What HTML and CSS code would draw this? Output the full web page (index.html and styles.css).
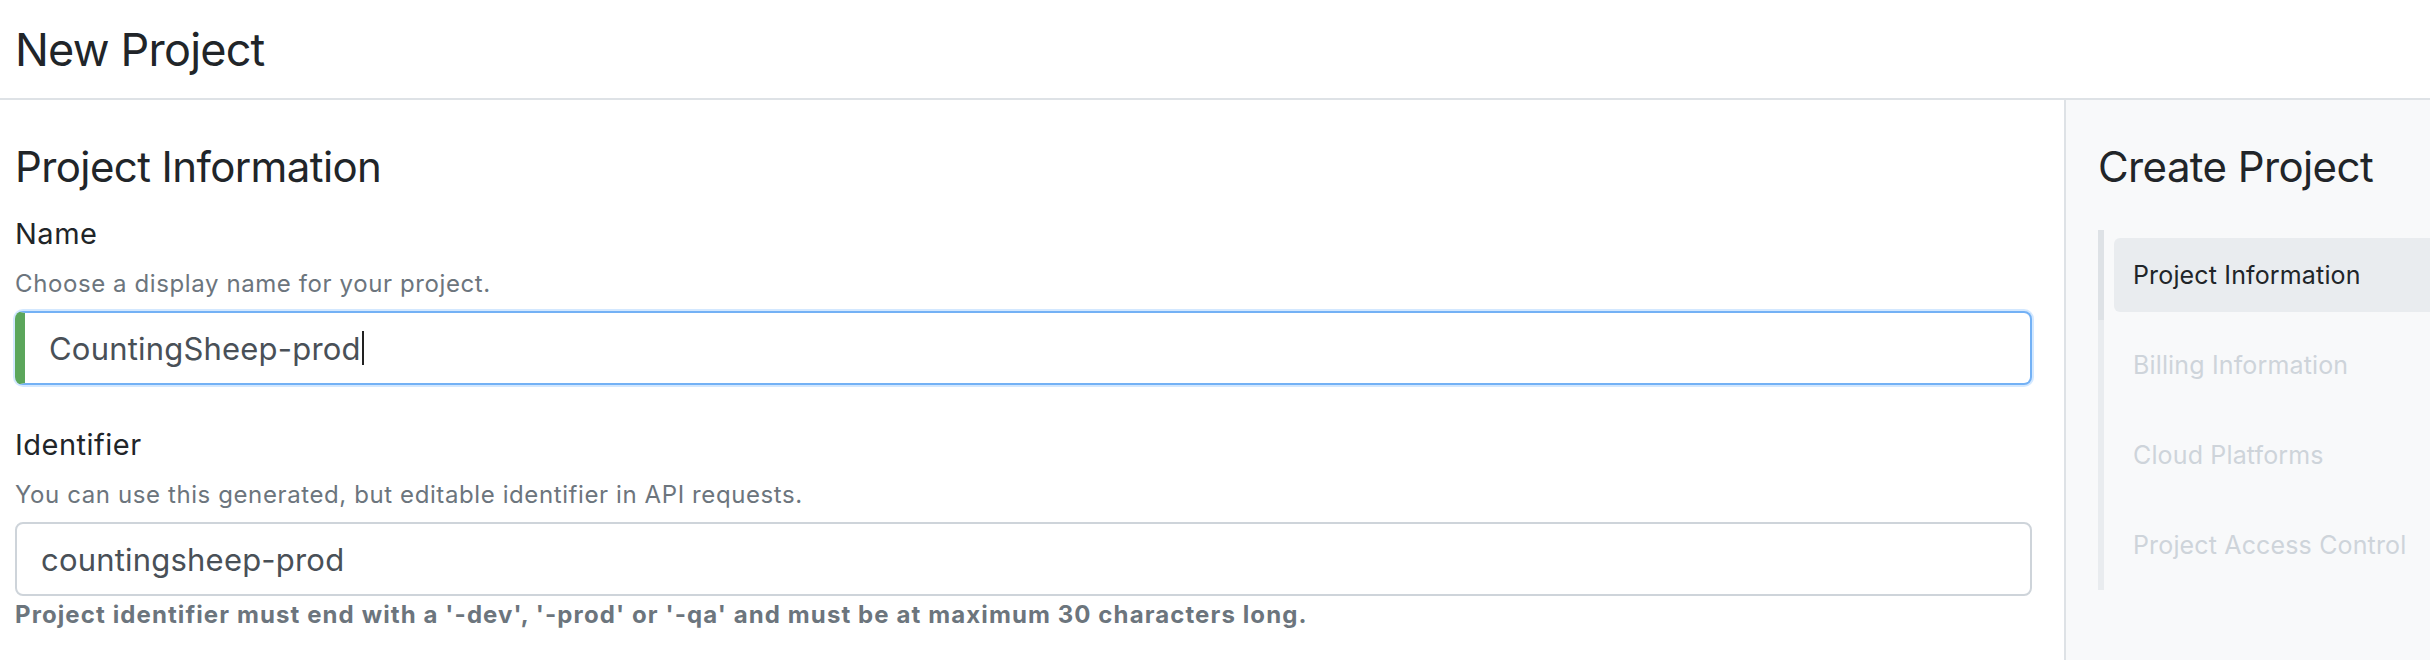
FILE: index.html
```html
<!DOCTYPE html>
<html lang="en">
<head>
<meta charset="utf-8">
<title>New Project</title>
<link rel="stylesheet" href="styles.css">
</head>
<body>
  <header class="page-header">
    <h1 class="page-title">New Project</h1>
  </header>
  <div class="layout">
    <main class="main">
      <h2 class="section-title">Project Information</h2>
      <div class="field">
        <label class="field-label">Name</label>
        <p class="field-help">Choose a display name for your project.</p>
        <div class="form-control is-focused is-valid"><span class="value">CountingSheep-prod</span><span class="caret"></span></div>
      </div>
      <div class="field field-second">
        <label class="field-label">Identifier</label>
        <p class="field-help">You can use this generated, but editable identifier in API requests.</p>
        <div class="form-control"><span class="value">countingsheep-prod</span></div>
        <p class="field-error">Project identifier must end with a '-dev', '-prod' or '-qa' and must be at maximum 30 characters long.</p>
      </div>
    </main>
    <aside class="sidebar">
      <h2 class="section-title">Create Project</h2>
      <ul class="steps">
        <li class="step active"><span class="step-link">Project Information</span></li>
        <li class="step"><span class="step-link">Billing Information</span></li>
        <li class="step"><span class="step-link">Cloud Platforms</span></li>
        <li class="step"><span class="step-link">Project Access Control</span></li>
      </ul>
    </aside>
  </div>
</body>
</html>
```

FILE: styles.css
```css
html, body {
  margin: 0;
  height: 100%;
}
body {
  font-family: Inter, "Noto Sans", Roboto, sans-serif;
  color: #212529;
  background: #fff;
  display: flex;
  flex-direction: column;
  overflow: hidden;
}
.page-header {
  height: 98px;
  border-bottom: 2px solid #dee2e6;
  padding-left: 15px;
  flex: none;
}
.page-title {
  margin: 0;
  padding-top: 22px;
  font-size: 45px;
  line-height: 56px;
  font-weight: 400;
  letter-spacing: -0.8px;
}
.layout {
  flex: 1;
  display: flex;
  min-height: 0;
}
.main {
  flex: 1;
  padding: 42px 32px 0 15px;
  min-width: 0;
}
.section-title {
  margin: 0;
  font-size: 42px;
  line-height: 50px;
  font-weight: 400;
  letter-spacing: -0.6px;
}
.field {
  margin-top: 25px;
}
.field-second {
  margin-top: 43px;
}
.field-label {
  display: block;
  font-size: 29px;
  line-height: 34px;
  letter-spacing: 0.5px;
}
.field-help {
  margin: 18px 0 0;
  font-size: 24px;
  line-height: 30px;
  letter-spacing: 0.6px;
  color: #6c757d;
}
.form-control {
  margin-top: 12px;
  box-sizing: border-box;
  height: 74px;
  border: 2px solid #ced4da;
  border-radius: 8px;
  padding: 0 24px;
  display: flex;
  align-items: center;
  font-size: 31px;
  letter-spacing: 0.2px;
  color: #495057;
  background: #fff;
}
.form-control.is-focused {
  border-color: #73b1f5;
  box-shadow: 0 0 0 2px rgba(128, 189, 255, 0.35);
}
.form-control.is-valid {
  border-left: 10px solid #5ba65b;
  padding-left: 24px;
}
.caret {
  width: 2px;
  height: 34px;
  background: #222;
  margin-left: 1px;
}
.field-error {
  margin: 5px 0 0;
  font-size: 24px;
  line-height: 28px;
  font-weight: 700;
  letter-spacing: 1.1px;
  color: #6c757d;
}
.sidebar {
  flex: none;
  box-sizing: border-box;
  width: 366px;
  border-left: 2px solid #dee2e6;
  background: #f8f9fa;
  padding: 42px 0 0 32px;
  overflow: hidden;
}
.steps {
  list-style: none;
  margin: 38px 0 0;
  padding: 0;
  width: 420px;
  border-left: 6px solid #e9ecef;
}
.step {
  height: 90px;
  box-sizing: border-box;
  padding: 8px 0 8px 10px;
}
.step.active {
  margin-left: -6px;
  border-left: 6px solid #dee2e6;
}
.step-link {
  display: flex;
  align-items: center;
  height: 100%;
  padding-left: 19px;
  border-radius: 6px;
  font-size: 25px;
  letter-spacing: 0.15px;
  color: #ced4da;
}
.step.active .step-link {
  background: #e9ecef;
  color: #212529;
}
```
